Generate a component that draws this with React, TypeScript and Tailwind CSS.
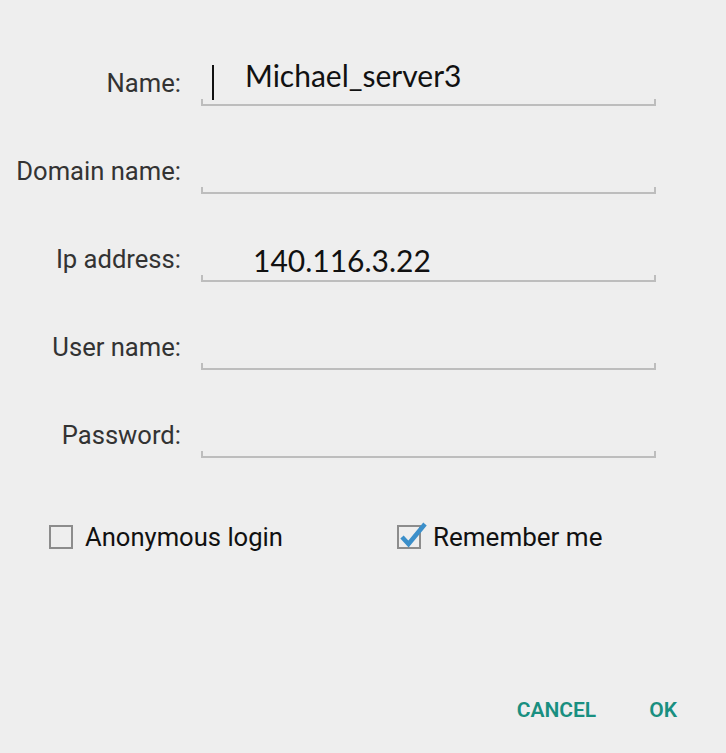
const fields = [
  { label: "Name:", value: "Michael_server3", cursor: true, pl: "pl-[44px]", mb: "mb-[11px]" },
  { label: "Domain name:", value: "" },
  { label: "Ip address:", value: "140.116.3.22", pl: "pl-[52px]", mb: "mb-[2px]" },
  { label: "User name:", value: "" },
  { label: "Password:", value: "" },
];

function Field({ label, value, cursor, pl, mb }: { label: string; value: string; cursor?: boolean; pl?: string; mb?: string }) {
  return (
    <div className="flex h-[88px] items-end">
      <div className="mb-[8px] w-[181px] text-right text-[25.6px] leading-[30px] text-[#333333] font-['Roboto',sans-serif]">
        {label}
      </div>
      <div className={`relative ml-[20px] flex h-[50px] w-[455px] items-end border-b-2 border-[#bdbdbd] ${pl ?? ""}`}>
        <span className="absolute bottom-0 left-0 h-[5px] w-[2px] bg-[#bdbdbd]" />
        <span className="absolute bottom-0 right-0 h-[5px] w-[2px] bg-[#bdbdbd]" />
        {cursor && <span className="absolute bottom-[4px] left-[11px] h-[35px] w-[2px] bg-[#111]" />}
        <span className={`${mb ?? ""} text-[30px] leading-[36px] text-[#111] font-['Lato',sans-serif]`}>{value}</span>
      </div>
    </div>
  );
}

export default function App() {
  return (
    <div className="h-[753px] w-full overflow-hidden bg-[#eeeeee] font-['Roboto',sans-serif]">
      <div className="pt-[18px]">
        {fields.map((f) => (
          <Field key={f.label} {...f} />
        ))}
      </div>

      <div className="mt-[61px] flex h-[36px] items-center pl-[49px]">
        <div className="flex w-[348px] items-center">
          <span className="h-[24px] w-[24px] border-2 border-[#8c8c8c]" />
          <span className="ml-[12px] text-[25.6px] text-[#111]">Anonymous login</span>
        </div>
        <div className="flex items-center">
          <span className="relative h-[24px] w-[24px] border-2 border-[#8c8c8c]">
            <svg className="absolute left-[-2px] top-[-8px]" width="32" height="32" viewBox="0 0 32 32">
              <path d="M5 18 L11.5 25 L28 5" fill="none" stroke="#3b8fca" strokeWidth="4.5" strokeLinejoin="miter" />
            </svg>
          </span>
          <span className="ml-[12px] text-[26px] text-[#111]">Remember me</span>
        </div>
      </div>

      <div className="mt-[143px] flex justify-end gap-[53px] pr-[49px] text-[21px] leading-[24px] font-semibold text-[#198f80]">
        <span>CANCEL</span>
        <span>OK</span>
      </div>
    </div>
  );
}
